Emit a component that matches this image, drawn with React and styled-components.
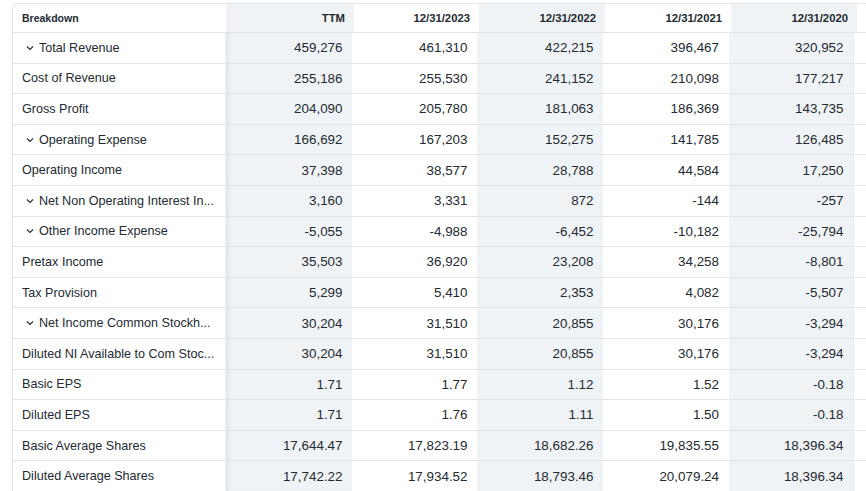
import React from "react";
import styled, { createGlobalStyle } from "styled-components";

const Global = createGlobalStyle`
  html, body { margin: 0; padding: 0; background: #fff; overflow: hidden; }
  body { font-family: "Liberation Sans", Arial, sans-serif; color: #232a31; }
`;

const Page = styled.div`
  padding: 3px 0 0 12px;
  width: 866px;
  box-sizing: border-box;
`;

const Table = styled.div`
  border-top: 1px solid #e0e4e9;
  border-left: 1px solid #e0e4e9;
  border-top-left-radius: 6px;
  overflow: hidden;
`;

const HeadRow = styled.div`
  display: grid;
  grid-template-columns: 213px 128px 125px 126px 126px 126px 1fr;
  height: 28px;
  border-bottom: 1px solid #e0e4e9;
`;

const HeadCell = styled.div`
  display: flex;
  align-items: center;
  justify-content: ${(p) => (p.$first ? "flex-start" : "flex-end")};
  padding: ${(p) => (p.$first ? "0 0 0 9px" : "0 9px 0 0")};
  background: ${(p) => (p.$alt ? "#f0f3f5" : "#fff")};
  font-weight: 700;
  font-size: ${(p) => (p.$first ? "10.5px" : "11.3px")};
  color: #232a31;
`;

const Row = styled.div`
  display: grid;
  grid-template-columns: 213px 126px 125px 126px 125.5px 124.5px 1fr;
  height: 30.6px;
  box-sizing: border-box;
`;

const LabelCell = styled.div`
  display: flex;
  align-items: center;
  padding-left: ${(p) => (p.$expand ? "13px" : "9px")};
  font-size: 12.6px;
  color: #232a31;
  white-space: nowrap;
  overflow: hidden;
  border-bottom: 1px solid #e0e4e9;
  border-right: 1px solid #eef0f3;
`;

const Chevron = styled.svg`
  width: 8px;
  height: 6px;
  margin-right: 5px;
  flex: none;
`;

const ValueCell = styled.div`
  display: flex;
  align-items: center;
  justify-content: flex-end;
  padding-right: 9.5px;
  font-size: 13.4px;
  color: #232a31;
  background: ${(p) => (p.$alt ? "#f0f3f5" : "#fff")};
  border-bottom: 1px solid #e0e4e9;
  box-shadow: ${(p) => (p.$shadow ? "inset 4px 0 4px -3px rgba(40,60,80,0.12)" : "none")};
`;

const Filler = styled.div`
  border-bottom: 1px solid #e0e4e9;
  border-left: 1px solid #e6e9ed;
`;

const headers = ["TTM", "12/31/2023", "12/31/2022", "12/31/2021", "12/31/2020"];

const rows = [
  ["Total Revenue", true, ["459,276", "461,310", "422,215", "396,467", "320,952"]],
  ["Cost of Revenue", false, ["255,186", "255,530", "241,152", "210,098", "177,217"]],
  ["Gross Profit", false, ["204,090", "205,780", "181,063", "186,369", "143,735"]],
  ["Operating Expense", true, ["166,692", "167,203", "152,275", "141,785", "126,485"]],
  ["Operating Income", false, ["37,398", "38,577", "28,788", "44,584", "17,250"]],
  ["Net Non Operating Interest In...", true, ["3,160", "3,331", "872", "-144", "-257"]],
  ["Other Income Expense", true, ["-5,055", "-4,988", "-6,452", "-10,182", "-25,794"]],
  ["Pretax Income", false, ["35,503", "36,920", "23,208", "34,258", "-8,801"]],
  ["Tax Provision", false, ["5,299", "5,410", "2,353", "4,082", "-5,507"]],
  ["Net Income Common Stockh...", true, ["30,204", "31,510", "20,855", "30,176", "-3,294"]],
  ["Diluted NI Available to Com Stoc...", false, ["30,204", "31,510", "20,855", "30,176", "-3,294"]],
  ["Basic EPS", false, ["1.71", "1.77", "1.12", "1.52", "-0.18"]],
  ["Diluted EPS", false, ["1.71", "1.76", "1.11", "1.50", "-0.18"]],
  ["Basic Average Shares", false, ["17,644.47", "17,823.19", "18,682.26", "19,835.55", "18,396.34"]],
  ["Diluted Average Shares", false, ["17,742.22", "17,934.52", "18,793.46", "20,079.24", "18,396.34"]],
];

export default function App() {
  return (
    <Page>
      <Global />
      <Table>
        <HeadRow>
          <HeadCell $first>Breakdown</HeadCell>
          {headers.map((h, i) => (
            <HeadCell key={h} $alt={i % 2 === 0}>
              {h}
            </HeadCell>
          ))}
          <HeadCell />
        </HeadRow>
        {rows.map(([label, expand, vals]) => (
          <Row key={label}>
            <LabelCell $expand={expand}>
              {expand && (
                <Chevron viewBox="0 0 8 6">
                  <path d="M1 1.5 L4 4.5 L7 1.5" fill="none" stroke="#232a31" strokeWidth="1.1" />
                </Chevron>
              )}
              {label}
            </LabelCell>
            {vals.map((v, i) => (
              <ValueCell key={i} $alt={i % 2 === 0} $shadow={i === 0}>
                {v}
              </ValueCell>
            ))}
            <Filler />
          </Row>
        ))}
      </Table>
    </Page>
  );
}
